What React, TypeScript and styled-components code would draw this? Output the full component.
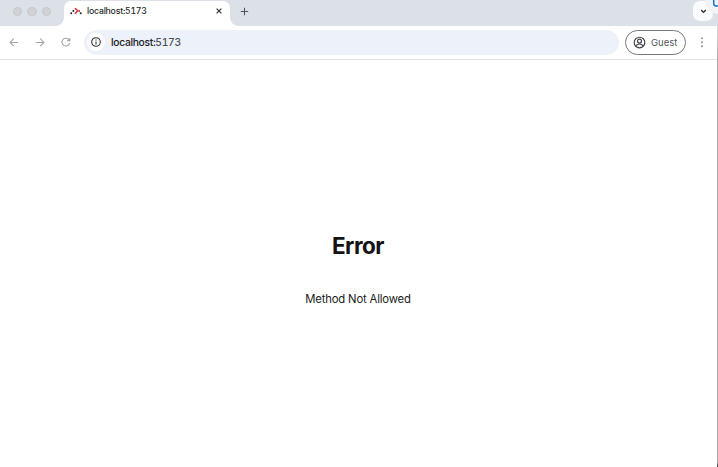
import React from 'react';
import styled, { createGlobalStyle } from 'styled-components';

const GlobalStyle = createGlobalStyle`
  * { box-sizing: border-box; }
  body { margin: 0; background: #fff; overflow: hidden; }
`;

const Window = styled.div`
  position: relative;
  display: flex;
  flex-direction: column;
  width: 718px;
  height: 467px;
  overflow: hidden;
  background: #fff;
  color: #1f2023;
  font-family: Inter, 'Liberation Sans', sans-serif;
`;

const TabStrip = styled.header`
  display: flex;
  height: 26px;
  flex: none;
  background: #dce1e8;
`;

const WindowControls = styled.div`
  display: flex;
  gap: 5px;
  width: 64px;
  padding: 7px 0 0 13px;
`;

const ControlDot = styled.span`
  width: 9.4px;
  height: 9.4px;
  border: 1px solid #c5c8cb;
  border-radius: 50%;
  background: #cfd1d4;
`;

const Tab = styled.div`
  position: relative;
  display: flex;
  align-items: center;
  width: 166px;
  height: 25px;
  margin-top: 1px;
  padding: 0 6px 5px 6px;
  border-radius: 7px 7px 0 0;
  background: #fff;
  &::before, &::after {
    content: '';
    position: absolute;
    bottom: 0;
    width: 8px;
    height: 8px;
  }
  &::before {
    left: -8px;
    background: radial-gradient(circle at 0 0, transparent 7.5px, #fff 8px);
  }
  &::after {
    right: -8px;
    background: radial-gradient(circle at 100% 0, transparent 7.5px, #fff 8px);
  }
`;

const TabTitle = styled.span`
  flex: 1;
  margin-left: 5px;
  font-size: 8.7px;
  line-height: 12px;
  letter-spacing: -0.21px;
  font-weight: 450;
  font-variant-numeric: tabular-nums;
  color: #292a2d;
`;

const IconButton = styled.button<{ $width: number; $height?: number }>`
  display: flex;
  flex: none;
  align-items: center;
  justify-content: center;
  width: ${({ $width }) => $width}px;
  height: ${({ $height = 24 }) => $height}px;
  padding: 0;
  border: 0;
  background: transparent;
`;

const TabSearch = styled(IconButton)`
  margin: 1px 5px 0 auto;
  border-radius: 7px;
  background: #fafbfc;
`;

const Toolbar = styled.nav`
  display: flex;
  align-items: center;
  flex: none;
  height: 34px;
  padding: 0 0 1px 1px;
  border-bottom: 1px solid #dfe1e3;
  background: #fff;
`;

const AddressBar = styled.div`
  display: flex;
  align-items: center;
  flex: none;
  width: 535px;
  height: 25px;
  margin-left: 5px;
  padding-left: 3px;
  border-radius: 13px;
  background: #edf1fa;
`;

const SiteInfo = styled.span`
  display: flex;
  align-items: center;
  justify-content: center;
  width: 18px;
  height: 18px;
  border-radius: 50%;
  background: #fff;
`;

const Address = styled.span`
  margin-left: 6px;
  font-size: 10.3px;
  line-height: 15px;
  letter-spacing: -0.32px;
  font-weight: 450;
  font-variant-numeric: tabular-nums;
  color: #202124;
`;

const Port = styled.span`
  color: #4d5156;
`;

const Profile = styled.button`
  display: flex;
  align-items: center;
  flex: none;
  gap: 5px;
  width: 61px;
  height: 25px;
  margin-left: 6px;
  padding: 0 0 0 7px;
  border: 1px solid #74777b;
  border-radius: 13px;
  background: #fff;
  color: #55585c;
  font: 9.5px/13px Inter, sans-serif;
`;

const Page = styled.main`
  display: flex;
  flex: 1;
  flex-direction: column;
  align-items: center;
  padding: 171px 2px 0 0;
`;

const Heading = styled.h1`
  margin: 0;
  font-size: 22.5px;
  line-height: 30px;
  letter-spacing: -0.5px;
  font-weight: 700;
  color: #141414;
`;

const Message = styled.p`
  margin: 29px 0 0;
  font-size: 11.3px;
  line-height: 18px;
  letter-spacing: -0.17px;
  color: #1b1b1b;
`;

const WindowEdge = styled.div`
  position: absolute;
  top: 26px;
  right: 0;
  bottom: 0;
  width: 1px;
  background: linear-gradient(#d8dade 0, #aaacae 35px, #a8a8a8 calc(100% - 5px), #333 100%);
`;

const CornerOverlay = styled.div`
  position: absolute;
  top: 0;
  right: 0;
  width: 13px;
  height: 14px;
  overflow: hidden;
  svg { display: block; }
`;

const RouterLogo = () => (
  <svg width="12" height="10" viewBox="0 0 12 10">
    <path d="M5.3 2.6 7.7 4.5 6 6.8" fill="none" stroke="#d93239" strokeWidth="1.5" strokeLinecap="round" strokeLinejoin="round" />
    <g fill="#202124">
      <circle cx="1.2" cy="7.3" r="1" />
      <circle cx="3.4" cy="5" r="1" />
      <circle cx="5.1" cy="7.3" r=".65" />
      <circle cx="10.7" cy="7.3" r="1" />
    </g>
    <circle cx="9.2" cy="5" r=".9" fill="#a5363b" />
  </svg>
);

const Arrow = ({ forward = false }: { forward?: boolean }) => (
  <svg width="10" height="10" viewBox="0 0 10 10" fill="none" stroke="#a2a4a7" strokeWidth="1.05">
    {forward
      ? <path d="M.8 5.4H8.9M5.2 1.6 9 5.4 5.2 9.2" />
      : <path d="M9.2 5.4H1.1M4.8 1.6 1 5.4l3.8 3.8" />}
  </svg>
);

export default function App() {
  return (
    <>
      <GlobalStyle />
      <Window>
        <TabStrip>
          <WindowControls><ControlDot /><ControlDot /><ControlDot /></WindowControls>
          <Tab>
            <RouterLogo />
            <TabTitle>localhost:5173</TabTitle>
            <IconButton $width={10} $height={12} aria-label="Close tab">
              <svg width="6" height="6" viewBox="0 0 6 6" stroke="#34363a" strokeWidth="1.2"><path d="m.6.6 4.8 4.8m0-4.8L.6 5.4" /></svg>
            </IconButton>
          </Tab>
          <IconButton $width={28} $height={23} aria-label="New tab">
            <svg width="9" height="9" viewBox="0 0 9 9" stroke="#515458" strokeWidth="1.1"><path d="M4.5.8v7.4M.8 4.5h7.4" /></svg>
          </IconButton>
          <TabSearch $width={20} $height={20} aria-label="Search tabs">
            <svg width="7" height="5" viewBox="0 0 7 5" fill="none" stroke="#292b2e" strokeWidth="1.35"><path d="m1.2 1.1 2.3 2.3 2.3-2.3" /></svg>
          </TabSearch>
        </TabStrip>
        <Toolbar>
          <IconButton $width={26} aria-label="Back"><Arrow /></IconButton>
          <IconButton $width={26} aria-label="Forward"><Arrow forward /></IconButton>
          <IconButton $width={26} aria-label="Reload">
            <svg width="10" height="10" viewBox="0 0 10 10" fill="none" stroke="#9b9da0" strokeWidth="1.05">
              <path d="M8.6 6.1A3.9 3.9 0 1 1 7.8 2.6L8.8 3.7M8.8 1v2.8H5.9" />
            </svg>
          </IconButton>
          <AddressBar>
            <SiteInfo>
              <svg width="10" height="10" viewBox="0 0 10 10" fill="none" stroke="#303236" strokeWidth="1.1">
                <circle cx="5" cy="5" r="4.3" /><path d="M5 4.4v3M5 2.4v1" />
              </svg>
            </SiteInfo>
            <Address>localhost:<Port>5173</Port></Address>
          </AddressBar>
          <Profile>
            <svg width="13" height="13" viewBox="0 0 13 13" fill="none" stroke="#434549" strokeWidth="1.15">
              <circle cx="6.5" cy="6.5" r="5.3" /><circle cx="6.5" cy="5.1" r="2" /><path d="M2.8 10c1-1.6 2.3-2 3.7-2s2.7.4 3.7 2" />
            </svg>
            Guest
          </Profile>
          <IconButton $width={32} aria-label="Menu">
            <svg width="4" height="12" viewBox="0 0 4 12" fill="#919397"><circle cx="2" cy="2.3" r="1.05" /><circle cx="2" cy="6.3" r="1.05" /><circle cx="2" cy="10.3" r="1.05" /></svg>
          </IconButton>
        </Toolbar>
        <Page>
          <Heading>Error</Heading>
          <Message>Method Not Allowed</Message>
        </Page>
        <WindowEdge />
        <CornerOverlay>
          <svg width="13" height="14" viewBox="0 0 13 14">
            <path d="M0 0h13v14C5 13 0 8 0 0Z" fill="#f1f3f6" />
            <path d="M8.7 0v3.6Q8.7 6 11 6h2" fill="none" stroke="#1674d9" strokeWidth="1.5" />
          </svg>
        </CornerOverlay>
      </Window>
    </>
  );
}
